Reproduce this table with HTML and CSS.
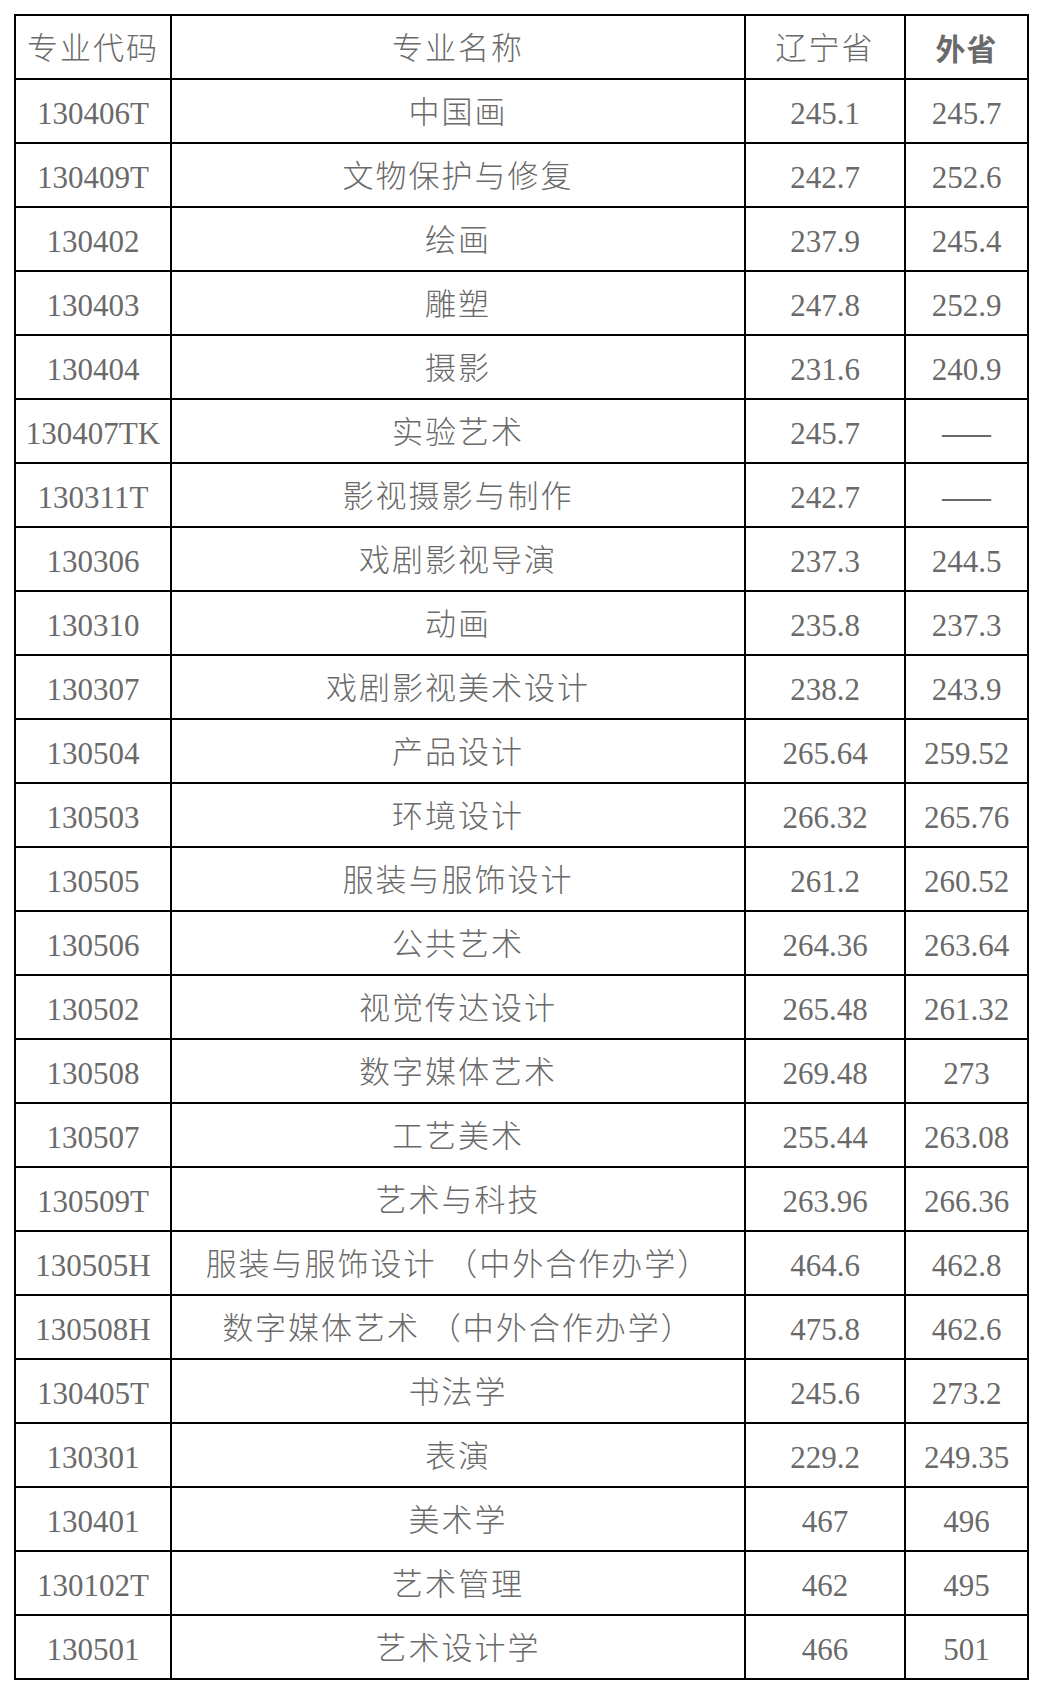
FILE: index.html
```html
<!DOCTYPE html>
<html lang="zh-CN">
<head>
<meta charset="utf-8">
<title>专业分数线</title>
<link rel="stylesheet" href="styles.css">
</head>
<body>
<table class="score-table">
  <colgroup>
    <col class="c-code"><col class="c-name"><col class="c-ln"><col class="c-out">
  </colgroup>
  <thead>
    <tr>
      <th class="h-serif">专业代码</th>
      <th class="h-serif">专业名称</th>
      <th class="h-serif">辽宁省</th>
      <th class="h-bold">外省</th>
    </tr>
  </thead>
  <tbody>
    <tr><td>130406T</td><td class="name">中国画</td><td>245.1</td><td>245.7</td></tr>
    <tr><td>130409T</td><td class="name">文物保护与修复</td><td>242.7</td><td>252.6</td></tr>
    <tr><td>130402</td><td class="name">绘画</td><td>237.9</td><td>245.4</td></tr>
    <tr><td>130403</td><td class="name">雕塑</td><td>247.8</td><td>252.9</td></tr>
    <tr><td>130404</td><td class="name">摄影</td><td>231.6</td><td>240.9</td></tr>
    <tr><td>130407TK</td><td class="name">实验艺术</td><td>245.7</td><td class="dash">——</td></tr>
    <tr><td>130311T</td><td class="name">影视摄影与制作</td><td>242.7</td><td class="dash">——</td></tr>
    <tr><td>130306</td><td class="name">戏剧影视导演</td><td>237.3</td><td>244.5</td></tr>
    <tr><td>130310</td><td class="name">动画</td><td>235.8</td><td>237.3</td></tr>
    <tr><td>130307</td><td class="name">戏剧影视美术设计</td><td>238.2</td><td>243.9</td></tr>
    <tr><td>130504</td><td class="name">产品设计</td><td>265.64</td><td>259.52</td></tr>
    <tr><td>130503</td><td class="name">环境设计</td><td>266.32</td><td>265.76</td></tr>
    <tr><td>130505</td><td class="name">服装与服饰设计</td><td>261.2</td><td>260.52</td></tr>
    <tr><td>130506</td><td class="name">公共艺术</td><td>264.36</td><td>263.64</td></tr>
    <tr><td>130502</td><td class="name">视觉传达设计</td><td>265.48</td><td>261.32</td></tr>
    <tr><td>130508</td><td class="name">数字媒体艺术</td><td>269.48</td><td>273</td></tr>
    <tr><td>130507</td><td class="name">工艺美术</td><td>255.44</td><td>263.08</td></tr>
    <tr><td>130509T</td><td class="name">艺术与科技</td><td>263.96</td><td>266.36</td></tr>
    <tr><td>130505H</td><td class="name">服装与服饰设计 （中外合作办学）</td><td>464.6</td><td>462.8</td></tr>
    <tr><td>130508H</td><td class="name">数字媒体艺术 （中外合作办学）</td><td>475.8</td><td>462.6</td></tr>
    <tr><td>130405T</td><td class="name">书法学</td><td>245.6</td><td>273.2</td></tr>
    <tr><td>130301</td><td class="name">表演</td><td>229.2</td><td>249.35</td></tr>
    <tr><td>130401</td><td class="name">美术学</td><td>467</td><td>496</td></tr>
    <tr><td>130102T</td><td class="name">艺术管理</td><td>462</td><td>495</td></tr>
    <tr><td>130501</td><td class="name">艺术设计学</td><td>466</td><td>501</td></tr>
  </tbody>
</table>
</body>
</html>
```

FILE: styles.css
```css
html, body {
  margin: 0;
  padding: 0;
  background: #ffffff;
}

body {
  padding: 14px 0 0 14px;
}

.score-table {
  border-collapse: collapse;
  table-layout: fixed;
  width: 1013px;
  font-family: "Liberation Serif", "Noto Sans CJK SC", serif;
  font-size: 31px;
  color: #6a6a6a;
}

.c-code { width: 156px; }
.c-name { width: 574px; }
.c-ln { width: 160px; }
.c-out { width: 123px; }

.score-table tr {
  height: 64px;
}

.score-table th,
.score-table td {
  border: 2px solid #000;
  padding: 5px 0 0 0;
  text-align: center;
  vertical-align: middle;
  white-space: nowrap;
  font-weight: normal;
  line-height: 1;
}

.score-table th {
  padding-top: 2px;
}

.score-table .h-serif {
  font-weight: 300;
  letter-spacing: 2px;
}

.score-table .h-bold {
  font-family: "Noto Sans CJK SC", sans-serif;
  font-weight: 700;
  font-size: 30px;
  letter-spacing: 1px;
  padding-top: 0;
}

.score-table .name {
  font-weight: 300;
  letter-spacing: 2px;
  padding-top: 2px;
}

.score-table .dash {
  font-family: "Noto Sans CJK SC", sans-serif;
  font-size: 31px;
  padding-top: 0;
}
```
